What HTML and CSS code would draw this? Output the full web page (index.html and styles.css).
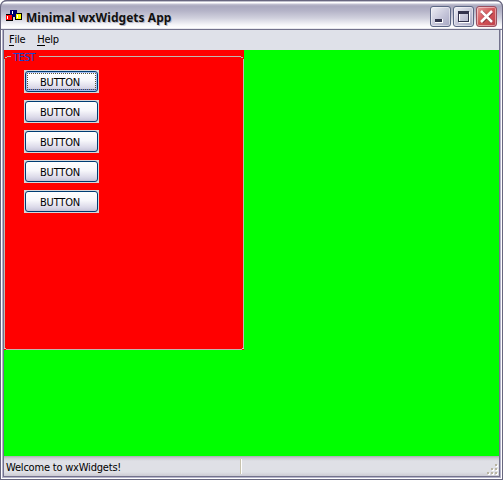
FILE: index.html
```html
<!DOCTYPE html>
<html lang="en">
<head>
<meta charset="utf-8">
<title>Minimal wxWidgets App</title>
<link rel="stylesheet" href="styles.css">
</head>
<body>
<div class="window">
  <header class="titlebar">
    <svg class="app-icon" width="16" height="12" viewBox="0 0 16 12" shape-rendering="crispEdges">
      <path fill="#000" d="M0 4h7v1H0zM9 3h7v1H9zM15 3h1v7h-1z"/>
      <path fill="#f00" d="M0 5h6v5H0z"/>
      <path fill="#00006b" d="M4 0h7v7H6V5H4z"/>
      <path fill="#ff0" d="M10 4h5v5h-5z"/>
      <path fill="#000" d="M0 10h7v1H0zM9 9h7v1H9zM9 7h1v3H9zM6 7h1v4H6z"/>
      <path fill="#fff" d="M6 1h1v3H6zM1 6h1v3H1zM11 5h1v3h-1z"/>
    </svg>
    <h1 class="title">Minimal wxWidgets App</h1>
    <div class="controls">
      <span class="control"><svg width="21" height="21" shape-rendering="crispEdges"><path fill="#fff" d="M5 13h8v4H5z"/><path fill="#33334d" d="M5 13h7v3H5z"/></svg></span>
      <span class="control"><svg width="21" height="21" shape-rendering="crispEdges"><path fill="none" stroke="#fff" d="M6.500 6.500h10v10h-10z"/><path fill="none" stroke="#33334d" d="M5.500 5.500h10v10h-10z"/><path fill="#33334d" d="M5 5h11v3H5z"/></svg></span>
      <span class="control close"><svg width="21" height="21"><path fill="none" stroke="#8c3540" stroke-width="3.500" d="M6 6l10 10M16 6L6 16"/><path fill="none" stroke="#fff" stroke-width="2.500" d="M5 5l11 11M16 5L5 16"/></svg></span>
    </div>
  </header>
  <nav class="menu"><span><u>F</u>ile</span><span><u>H</u>elp</span></nav>
  <main class="client">
    <section class="panel">
      <svg class="frame" width="240" height="300">
        <path fill="none" stroke="#c0b8b0" d="M7 6.500H3M3 7.500H1M.5 9v289M2 299.500h236M35 6.500h202M237 7.500h2M239.500 9v289"/>
        <path fill="none" stroke="#d0d0bf" d="M0 298.500h2M238 298.500h2"/>
      </svg>
      <span class="legend">TEST</span>
      <div class="buttons">
        <button class="button focused"><span>BUTTON</span></button>
        <button class="button"><span>BUTTON</span></button>
        <button class="button"><span>BUTTON</span></button>
        <button class="button"><span>BUTTON</span></button>
        <button class="button"><span>BUTTON</span></button>
      </div>
    </section>
  </main>
  <footer class="status">
    <span class="message">Welcome to wxWidgets!</span>
    <span class="divider"></span>
    <svg class="grip" width="12" height="12" shape-rendering="crispEdges"><path fill="#fff" d="M9 1h2v2H9zM5 5h2v2H5zM9 5h2v2H9zM1 9h2v2H1zM5 9h2v2H5zM9 9h2v2H9z"/><path fill="#b8b4a2" d="M8 0h2v2H8zM4 4h2v2H4zM8 4h2v2H8zM0 8h2v2H0zM4 8h2v2H4zM8 8h2v2H8z"/></svg>
  </footer>
</div>
</body>
</html>
```
FILE: styles.css
```css
* { box-sizing: border-box; }
body { margin: 0; background: #fff; overflow: hidden; }
.window {
  width: 503px; height: 480px;
  display: flex; flex-direction: column;
  padding: 0 4px 4px;
  border-radius: 7px 7px 0 0;
  background: #dfe1e9;
  box-shadow: inset 0 0 0 1px #68677f, inset 0 0 0 2px #fff, inset 0 0 0 3px #b4b3ca, inset 0 0 0 4px #73728c;
  font: 11px/14px "DejaVu Sans Condensed", "DejaVu Sans", sans-serif;
  font-stretch: condensed;
  letter-spacing: -.25px;
  color: #000;
}
.titlebar {
  height: 30px; flex: none; margin: 0 -4px; padding: 5px 6px 0 6px;
  display: flex; align-items: flex-start;
  border: 1px solid #68677f; border-bottom-color: #73728c;
  border-radius: 7px 7px 0 0;
  background: linear-gradient(#82819a 0, #fff 1px, #fff 2px, #c4c3d3 3px, #a9a8be 5px, #b5b4c8 10px, #d0d0dd 17px, #f6f6f9 24px, #fff 27px, #d0d0dc 28px);
}
.app-icon { margin: 4px 4px 0 -1px; flex: none; }
.title { margin: 4px 0 0; font: bold 12px/16px "Noto Sans", sans-serif; width: 160px; white-space: nowrap; color: #111; text-shadow: 1px 1px #b9b8c8; letter-spacing: .05px; }
.controls { display: flex; gap: 2px; margin-left: auto; margin-right: -1px; }
.control { width: 21px; height: 21px; border: 1px solid #5c6785; border-radius: 3px; background: linear-gradient(135deg, #eeeef5, #c5c5d9 55%, #a6a6c2); box-shadow: inset 0 0 0 1px #ffffff70; }
.control svg { display: block; margin: -1px; }
.close { background: linear-gradient(135deg, #e79a9b, #d45458 50%, #bd3f49); border-color: #994f61; }
.menu { height: 20px; flex: none; background: #dfe1e9; padding: 3px 5px; display: flex; gap: 12px; }
.menu u { text-decoration: none; border-bottom: 1px solid #000; display: inline-block; height: 13px; }
.client { flex: 1; background: #0f0; }
.panel { position: relative; width: 240px; height: 300px; background: #f00; padding: 20px 0 0 20px; }
.frame { position: absolute; inset: 0; }
.legend { position: absolute; left: 9px; top: 1px; color: #1446d5; letter-spacing: -.7px; }
.buttons { display: flex; flex-direction: column; gap: 7px; width: 75px; }
.button { height: 23px; padding: 1px; border: 0; background: #d8d7d8; font: inherit; letter-spacing: -.2px; color: #000; display: block; }
.button span { height: 21px; display: block; border: 1px solid #003c74; border-radius: 3px; line-height: 21px; padding-right: 3px; background: linear-gradient(#fff, #f7f7fb 45%, #dcdae9 80%, #c5c3d8); }
.focused span { box-shadow: inset 0 0 0 1px #a7bff0, inset 0 -2px #6982ee; outline: 1px dotted #5c5538; outline-offset: -3px; }
.status { height: 20px; flex: none; display: flex; padding-left: 2px; background: linear-gradient(#aaa9b2, #cbcad1 2px, #dfe0e6 5px, #dfe0e6 16px, #cccbd3); }
.message { width: 234px; line-height: 23px; height: 20px; letter-spacing: -.2px; }
.divider { width: 2px; height: 15px; margin-top: 3px; background: #fff; border-left: 1px solid #c7c2ae; }
.grip { margin: 8px 0 0 auto; }
```
